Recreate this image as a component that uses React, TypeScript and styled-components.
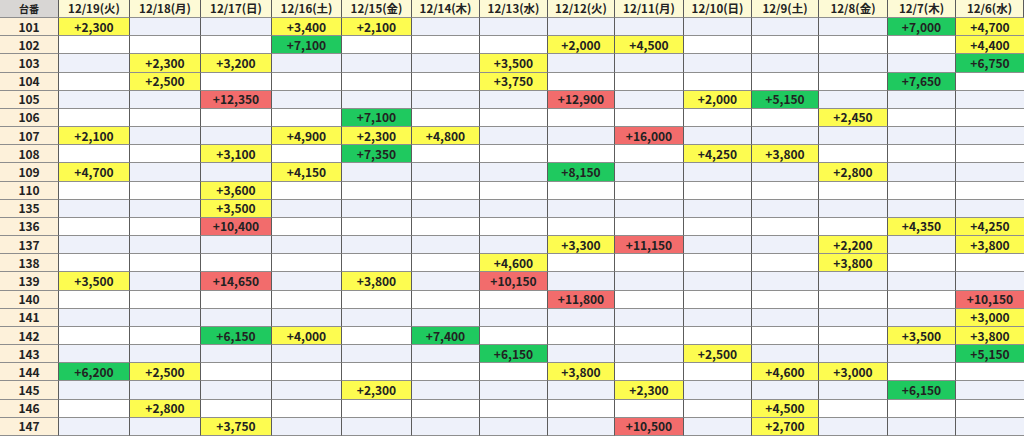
import React from "react";
import styled, { createGlobalStyle, css } from "styled-components";

const GlobalStyle = createGlobalStyle`
  html, body { margin: 0; padding: 0; background: #ffffff; }
  body { font-family: "Noto Sans CJK JP", "Noto Sans", sans-serif; }
`;

type Tone = "y" | "g" | "r" | undefined;

const dates = [
  "12/19(火)", "12/18(月)", "12/17(日)", "12/16(土)", "12/15(金)", "12/14(木)", "12/13(水)",
  "12/12(火)", "12/11(月)", "12/10(日)", "12/9(土)", "12/8(金)", "12/7(木)", "12/6(水)",
];

const colWidths = [59, 71, 71, 71, 70, 70, 68, 68, 67, 69, 68, 67, 69, 68, 68];

const D: Record<string, number> = {
  "19": 0, "18": 1, "17": 2, "16": 3, "15": 4, "14": 5, "13": 6,
  "12": 7, "11": 8, "10": 9, "9": 10, "8": 11, "7": 12, "6": 13,
};

type Entry = [string, string, Tone];
const rows: { id: string; cells: Entry[] }[] = [
  { id: "101", cells: [["19", "+2,300", "y"], ["16", "+3,400", "y"], ["15", "+2,100", "y"], ["7", "+7,000", "g"], ["6", "+4,700", "y"]] },
  { id: "102", cells: [["16", "+7,100", "g"], ["12", "+2,000", "y"], ["11", "+4,500", "y"], ["6", "+4,400", "y"]] },
  { id: "103", cells: [["18", "+2,300", "y"], ["17", "+3,200", "y"], ["13", "+3,500", "y"], ["6", "+6,750", "g"]] },
  { id: "104", cells: [["18", "+2,500", "y"], ["13", "+3,750", "y"], ["7", "+7,650", "g"]] },
  { id: "105", cells: [["17", "+12,350", "r"], ["12", "+12,900", "r"], ["10", "+2,000", "y"], ["9", "+5,150", "g"]] },
  { id: "106", cells: [["15", "+7,100", "g"], ["8", "+2,450", "y"]] },
  { id: "107", cells: [["19", "+2,100", "y"], ["16", "+4,900", "y"], ["15", "+2,300", "y"], ["14", "+4,800", "y"], ["11", "+16,000", "r"]] },
  { id: "108", cells: [["17", "+3,100", "y"], ["15", "+7,350", "g"], ["10", "+4,250", "y"], ["9", "+3,800", "y"]] },
  { id: "109", cells: [["19", "+4,700", "y"], ["16", "+4,150", "y"], ["12", "+8,150", "g"], ["8", "+2,800", "y"]] },
  { id: "110", cells: [["17", "+3,600", "y"]] },
  { id: "135", cells: [["17", "+3,500", "y"]] },
  { id: "136", cells: [["17", "+10,400", "r"], ["7", "+4,350", "y"], ["6", "+4,250", "y"]] },
  { id: "137", cells: [["12", "+3,300", "y"], ["11", "+11,150", "r"], ["8", "+2,200", "y"], ["6", "+3,800", "y"]] },
  { id: "138", cells: [["13", "+4,600", "y"], ["8", "+3,800", "y"]] },
  { id: "139", cells: [["19", "+3,500", "y"], ["17", "+14,650", "r"], ["15", "+3,800", "y"], ["13", "+10,150", "r"]] },
  { id: "140", cells: [["12", "+11,800", "r"], ["6", "+10,150", "r"]] },
  { id: "141", cells: [["6", "+3,000", "y"]] },
  { id: "142", cells: [["17", "+6,150", "g"], ["16", "+4,000", "y"], ["14", "+7,400", "g"], ["7", "+3,500", "y"], ["6", "+3,800", "y"]] },
  { id: "143", cells: [["13", "+6,150", "g"], ["10", "+2,500", "y"], ["6", "+5,150", "g"]] },
  { id: "144", cells: [["19", "+6,200", "g"], ["18", "+2,500", "y"], ["12", "+3,800", "y"], ["9", "+4,600", "y"], ["8", "+3,000", "y"]] },
  { id: "145", cells: [["15", "+2,300", "y"], ["11", "+2,300", "y"], ["7", "+6,150", "g"]] },
  { id: "146", cells: [["18", "+2,800", "y"], ["9", "+4,500", "y"]] },
  { id: "147", cells: [["17", "+3,750", "y"], ["11", "+10,500", "r"], ["9", "+2,700", "y"]] },
];

const Table = styled.div`
  display: grid;
  width: 1024px;
  height: 436px;
  grid-template-columns: ${colWidths.map((w) => `${w}px`).join(" ")};
  grid-template-rows: 18px repeat(23, 1fr);
  box-sizing: border-box;
  overflow: hidden;
`;

const cellBase = css`
  box-sizing: border-box;
  display: flex;
  align-items: center;
  justify-content: center;
  border-right: 1px solid #5c5c5c;
  border-bottom: 1px solid #8e8e8e;
  font-size: 12px;
  font-weight: 700;
  color: #222;
  white-space: nowrap;
  line-height: 1;
`;

const CornerCell = styled.div`
  ${cellBase};
  background: #d8d6d4;
  font-size: 10px;
`;

const HeaderCell = styled.div`
  ${cellBase};
  background: #fdfad6;
  font-size: 11.5px;
  &:last-child { border-right: none; }
`;

const IdCell = styled.div`
  ${cellBase};
  background: #fdf1da;
`;

const toneColors: Record<string, string> = {
  y: "#fdfc50",
  g: "#1fc95f",
  r: "#f26c6c",
};

const ValueCell = styled.div<{ $tone?: Tone; $alt: boolean; $last: boolean }>`
  ${cellBase};
  background: ${(p) => (p.$tone ? toneColors[p.$tone] : p.$alt ? "#eef1fa" : "#ffffff")};
  border-right: ${(p) => (p.$last ? "none" : "1px solid #5c5c5c")};
`;

export default function App() {
  return (
    <>
      <GlobalStyle />
      <Table>
        <CornerCell>台番</CornerCell>
        {dates.map((d) => (
          <HeaderCell key={d}>{d}</HeaderCell>
        ))}
        {rows.map((row, ri) => {
          const map: Record<number, Entry> = {};
          row.cells.forEach((c) => {
            map[D[c[0]]] = c;
          });
          return (
            <React.Fragment key={row.id}>
              <IdCell>{row.id}</IdCell>
              {dates.map((_, ci) => {
                const e = map[ci];
                return (
                  <ValueCell
                    key={ci}
                    $tone={e ? e[2] : undefined}
                    $alt={ri % 2 === 0}
                    $last={ci === dates.length - 1}
                  >
                    {e ? e[1] : ""}
                  </ValueCell>
                );
              })}
            </React.Fragment>
          );
        })}
      </Table>
    </>
  );
}
